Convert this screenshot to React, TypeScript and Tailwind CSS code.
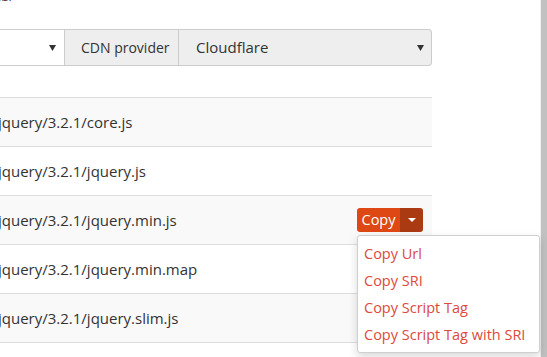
import React from "react";

const files = [
  "jquery/3.2.1/core.js",
  "jquery/3.2.1/jquery.js",
  "jquery/3.2.1/jquery.min.js",
  "jquery/3.2.1/jquery.min.map",
  "jquery/3.2.1/jquery.slim.js",
];

const menuItems = ["Copy Url", "Copy SRI", "Copy Script Tag", "Copy Script Tag with SRI"];

function Arrow() {
  return (
    <svg width="7" height="6" viewBox="0 0 7 6" className="shrink-0">
      <polygon points="0,0 7,0 3.5,6" fill="#333" />
    </svg>
  );
}

function CopyButton() {
  return (
    <div className="relative">
      <div className="flex h-[24px] overflow-hidden rounded-[3px] text-[14.5px] leading-[24px] text-white">
        <span className="w-[43px] bg-[#dd4814] text-center">Copy</span>
        <span className="flex w-[23px] items-center justify-center bg-[#a93a12]">
          <svg width="8" height="4" viewBox="0 0 8 4">
            <polygon points="0,0 8,0 4,4" fill="#fff" />
          </svg>
        </span>
      </div>
      {/* open dropdown */}
      <div className="absolute left-0 top-[27px] z-10 w-[183px] rounded-[3px] border border-[#cfcfcf] bg-white py-[4px] shadow-[0_4px_10px_rgba(0,0,0,0.15)]">
        {menuItems.map((m) => (
          <div key={m} className="h-[27px] whitespace-nowrap px-[6px] text-[14.5px] leading-[27px] text-[#dc4a3c]">
            {m}
          </div>
        ))}
      </div>
    </div>
  );
}

export default function App() {
  return (
    <div className="flex h-[357px] w-[547px] overflow-hidden bg-white font-['Open_Sans',sans-serif] text-[#333]">
      <div className="relative flex-1">
        {/* tail of the line above, cut by the top edge */}
        <div className="h-[29px] overflow-hidden">
          <span className="-ml-[6px] -mt-[12px] block text-[13px] leading-[16px] text-[#333]">ab/</span>
        </div>

        {/* CDN select group */}
        <div className="-ml-[20px] flex h-[37px] w-[452px] text-[15px]">
          <div className="flex w-[84px] items-center justify-end border border-r-0 border-[#ccc] bg-white pr-[8px]">
            <Arrow />
          </div>
          <div className="flex w-[115px] items-center border border-[#ccc] bg-[#eee] pl-[16px] text-[14px]">CDN provider</div>
          <div className="flex flex-1 items-center justify-between rounded-r-[4px] border border-l-0 border-[#ccc] bg-[#eee] pl-[17px] pr-[7px]">
            <span>Cloudflare</span>
            <Arrow />
          </div>
        </div>

        {/* files table */}
        <div className="mt-[31px] w-[432px] border-b border-[#ddd]">
          {files.map((f, i) => (
            <div
              key={f}
              className={`flex h-[49px] items-center justify-between border-t border-[#ddd] pr-[9px] text-[15px] ${i % 2 === 0 ? "bg-[#f9f9f9]" : "bg-white"}`}
            >
              <span className="-ml-[2px] whitespace-nowrap">{f}</span>
              {i === 2 && <CopyButton />}
            </div>
          ))}
        </div>
      </div>

      {/* scrollbar */}
      <div className="flex w-[7px]">
        <div className="w-[1px] bg-[#f1f1f1]" />
        <div className="flex-1 bg-[#c1c1c1]" />
      </div>
    </div>
  );
}
